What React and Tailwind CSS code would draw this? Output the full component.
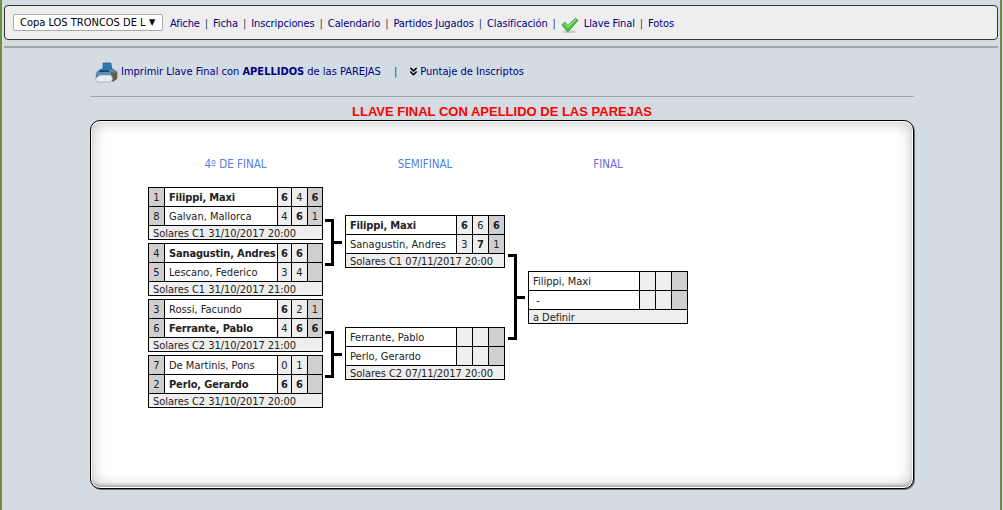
import React from "react";
import { ChevronsDown } from "lucide-react";

const font = { fontFamily: "'DejaVu Sans Condensed', 'DejaVu Sans', sans-serif" };

const links = ["Afiche", "Ficha", "Inscripciones", "Calendario", "Partidos Jugados", "Clasificación"];

const quarters = [
  { a: ["1", "Filippi, Maxi", true, ["6", "4", "6"], [1, 0, 1]], b: ["8", "Galvan, Mallorca", false, ["4", "6", "1"], [0, 1, 0]], foot: "Solares C1 31/10/2017 20:00" },
  { a: ["4", "Sanagustin, Andres", true, ["6", "6", ""], [1, 1, 0]], b: ["5", "Lescano, Federico", false, ["3", "4", ""], [0, 0, 0]], foot: "Solares C1 31/10/2017 21:00" },
  { a: ["3", "Rossi, Facundo", false, ["6", "2", "1"], [1, 0, 0]], b: ["6", "Ferrante, Pablo", true, ["4", "6", "6"], [0, 1, 1]], foot: "Solares C2 31/10/2017 21:00" },
  { a: ["7", "De Martinis, Pons", false, ["0", "1", ""], [0, 0, 0]], b: ["2", "Perlo, Gerardo", true, ["6", "6", ""], [1, 1, 0]], foot: "Solares C2 31/10/2017 20:00" },
];

const Row = ({ seed, name, bold, sets, wins, wide }) => (
  <div className="flex h-[19px] border-b border-black">
    {seed && <div className="w-[16px] shrink-0 border-r border-black bg-[#cfcfcf] text-center leading-[20px]">{seed}</div>}
    <div className={`min-w-0 flex-1 whitespace-nowrap pl-[4px] leading-[20px] ${bold ? "font-bold tracking-[-0.15px]" : ""}`}>{name}</div>
    {sets.map((s, i) => (
      <div
        key={i}
        className={`${wide ? "w-[16px]" : i === 2 ? "w-[15px]" : i === 1 ? "w-[16px]" : "w-[14px]"} shrink-0 border-l border-black text-center leading-[20px] ${i === 2 ? "bg-[#cfcfcf]" : "bg-[#eeeeee]"} ${wins[i] ? "font-bold" : ""}`}
      >
        {s}
      </div>
    ))}
  </div>
);

const Match = ({ m, width, wide }) => (
  <div className="h-[53px] shrink-0 border border-b-0 border-black bg-white text-[11px] text-[#222]" style={{ width }}>
    <Row {...m.top} wide={wide} />
    <Row {...m.bottom} wide={wide} />
    <div className="h-[14px] whitespace-nowrap border-b border-black bg-[#eeeeee] pl-[4px] leading-[15px] tracking-[-0.05px]">{m.foot}</div>
  </div>
);

const toRow = (r) => ({ seed: r[0], name: r[1], bold: r[2], sets: r[3], wins: r[4] });

const Bracket = ({ height, left, stub }) => (
  <div className="flex items-center" style={{ marginLeft: left }}>
    <div className="w-[9px] border-y-[3px] border-r-[3px] border-black" style={{ height }} />
    <div className="h-[3px] bg-black" style={{ width: stub }} />
  </div>
);

const Printer = () => (
  <svg width="24" height="21" viewBox="0 0 24 21">
    <path d="M9 1h8l1 8H9z" fill="#2f7ab8" stroke="#1d4f7c" strokeWidth="0.6" />
    <path d="M3 10l4-3h12l4 3v6l-3 2H6l-4-3z" fill="#5a8db8" stroke="#2e5578" strokeWidth="0.6" />
    <path d="M17 10l6 1v6l-4 3-2-3z" fill="#6b5a4a" />
    <path d="M1 17l5-4h11l2 4-3 3H3z" fill="#e8edf2" stroke="#8a97a3" strokeWidth="0.6" />
    <path d="M6 8h8l2 2H5z" fill="#174a75" />
  </svg>
);

const Check = () => (
  <svg width="18" height="18" viewBox="0 0 19 18">
    <ellipse cx="9" cy="16" rx="7" ry="1.5" fill="#c9c9c9" />
    <path d="M1 9l3-3 3.5 3.5L15 2l3 2-10 11.5h-1.5z" fill="#55c24a" stroke="#2f8f35" strokeWidth="0.8" strokeLinejoin="round" />
    <path d="M4 7.5l3.5 3.5L15.5 3" fill="none" stroke="#b9f0a8" strokeWidth="1" />
  </svg>
);

const Sep = () => <span className="text-[#345]">|</span>;

export default function App() {
  return (
    <div className="h-[510px] w-[1003px] overflow-hidden bg-[#d3dbe3] text-[11px] text-[#000080]" style={font}>
      <div className="h-full w-[1002px] border-x-2 border-[#6f8f3a] px-[2px] pt-[5px]">
        <nav className="flex h-[35px] items-center gap-[5px] rounded-[4px] border border-[#333] bg-[#eeeeee] pl-[8px] pt-[4px] tracking-[-0.1px]">
          <div className="relative -mt-[4px] mr-[2px] h-[17px] w-[150px] overflow-hidden rounded-[2px] border border-[#aaa] bg-white pl-[6px] text-[11px] leading-[15px] tracking-normal text-black">
            Copa LOS TRONCOS DE L
            <span className="absolute right-[2px] top-0 h-full w-[11px] bg-white text-[9px] text-black">▼</span>
          </div>
          {links.map((l) => (
            <React.Fragment key={l}>
              <a>{l}</a>
              <Sep />
            </React.Fragment>
          ))}
          <Check />
          <a>Llave Final</a>
          <Sep />
          <a>Fotos</a>
        </nav>
        <div className="mt-[6px] border-t-2 border-[#a5a5a5]" />
        <div className="mx-[86px] w-[824px]">
          <div className="flex h-[48px] items-center pl-[4px] pt-[1px]">
            <Printer />
            <a className="ml-[3px]">Imprimir Llave Final con <b>APELLIDOS</b> de las PAREJAS</a>
            <span className="ml-[13px] text-[#345]">|</span>
            <ChevronsDown size={13} strokeWidth={3} className="ml-[10px] -mt-[2px] text-black" />
            <a>Puntaje de Inscriptos</a>
          </div>
          <div className="border-t border-[#a5a5a5]" />
          <h1 className="h-[23px] text-center text-[13px] font-bold leading-[29px] text-[#ff0000]" style={{ fontFamily: "'Liberation Sans', sans-serif" }}>
            LLAVE FINAL CON APELLIDO DE LAS PAREJAS
          </h1>
          <main className="h-[369px] rounded-[10px] border border-black bg-white pl-[57px] pt-[37px] shadow-[inset_0_0_0_1px_#fff,inset_0_-3px_3px_#aaa,inset_0_0_16px_#bbb,1px_1px_0_#777]">
            <div className="flex h-[13px] text-[11.5px] leading-[13px] text-[#4f7fe0]">
              <div className="w-[175px] text-center">4º DE FINAL</div>
              <div className="ml-[22px] w-[160px] text-center">SEMIFINAL</div>
              <div className="ml-[23px] w-[160px] text-center text-[#6a6ae0]">FINAL</div>
            </div>
            <div className="mt-[16px] flex items-start">
              <div className="flex w-[175px] flex-col gap-[3px]">
                {quarters.map((q) => (
                  <Match key={q.foot + q.a[1]} width={175} m={{ top: toRow(q.a), bottom: toRow(q.b), foot: q.foot }} />
                ))}
              </div>
              <div className="flex w-[22px] flex-col pt-[32px]">
                <Bracket height={47} left={2} stub={8} />
                <div className="h-[65px]" />
                <Bracket height={47} left={2} stub={8} />
              </div>
              <div className="flex w-[160px] flex-col gap-[59px] pt-[28px]">
                <Match
                  width={160}
                  wide
                  m={{
                    top: { name: "Filippi, Maxi", bold: true, sets: ["6", "6", "6"], wins: [1, 0, 1] },
                    bottom: { name: "Sanagustin, Andres", sets: ["3", "7", "1"], wins: [0, 1, 0] },
                    foot: "Solares C1 07/11/2017 20:00",
                  }}
                />
                <Match
                  width={160}
                  wide
                  m={{
                    top: { name: "Ferrante, Pablo", sets: ["", "", ""], wins: [0, 0, 0] },
                    bottom: { name: "Perlo, Gerardo", sets: ["", "", ""], wins: [0, 0, 0] },
                    foot: "Solares C2 07/11/2017 20:00",
                  }}
                />
              </div>
              <div className="w-[23px] pt-[67px]">
                <Bracket height={86} left={3} stub={8} />
              </div>
              <div className="pt-[84px]">
                <Match
                  width={160}
                  wide
                  m={{
                    top: { name: "Filippi, Maxi", sets: ["", "", ""], wins: [0, 0, 0] },
                    bottom: { name: "\u00a0-", sets: ["", "", ""], wins: [0, 0, 0] },
                    foot: "a Definir",
                  }}
                />
              </div>
            </div>
          </main>
        </div>
      </div>
    </div>
  );
}
